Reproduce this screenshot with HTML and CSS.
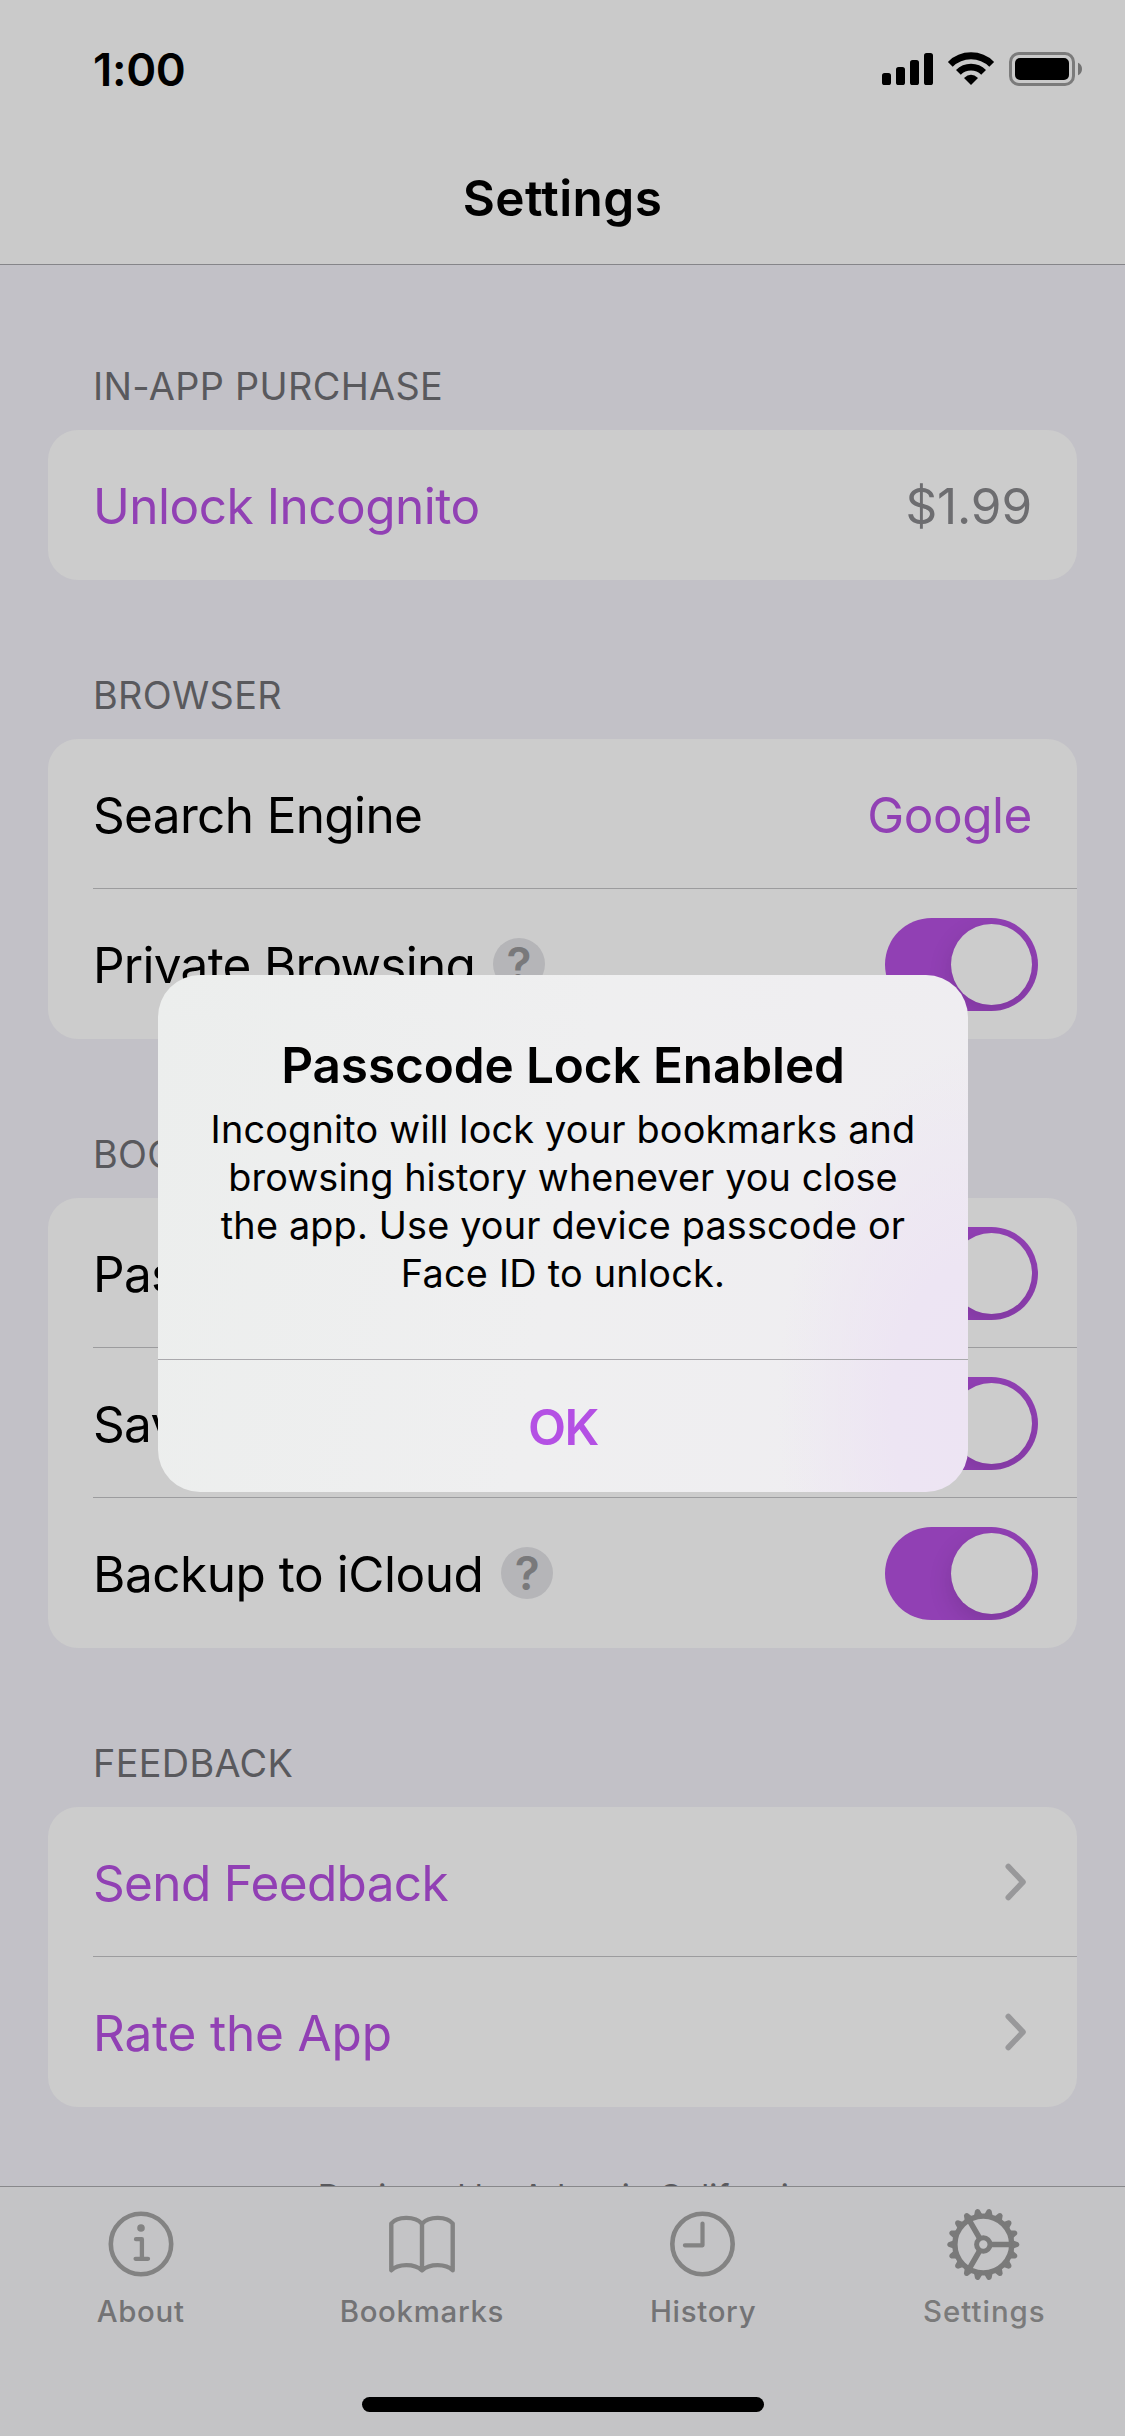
FILE: index.html
```html
<!DOCTYPE html>
<html lang="en">
<head>
<meta charset="utf-8">
<title>Settings</title>
<link rel="stylesheet" href="styles.css">
</head>
<body>
<div class="screen">
  <header class="navbar">
    <div class="status">
      <span class="time">1:00</span>
      <svg class="status-icons" width="204" height="40" viewBox="880 49 204 40">
        <rect x="882" y="73" width="9" height="12" rx="2.6"/>
        <rect x="896" y="67" width="9" height="18" rx="2.6"/>
        <rect x="910" y="60" width="9" height="25" rx="2.6"/>
        <rect x="924" y="53" width="9" height="32" rx="2.6"/>
        <path d="M950.3 64.3A29.3 29.3 0 0 1 991.7 64.3M958.4 72.4A17.9 17.9 0 0 1 983.6 72.4" fill="none" stroke="#000" stroke-width="6.8"/>
        <path d="M971 85L964 78Q971 71.5 978 78Z"/>
        <rect x="1010.5" y="53.5" width="63" height="31" rx="8.5" fill="none" stroke="#7b7b7b" stroke-width="3"/>
        <rect x="1015" y="58" width="54" height="22" rx="5"/>
        <path d="M1078 62.7Q1082 64.5 1082 69T1078 75.3Z" fill="#737373"/>
      </svg>
    </div>
    <h1 class="title">Settings</h1>
  </header>

  <main class="content">
    <section class="group">
      <h2 class="group-title">IN-APP PURCHASE</h2>
      <div class="card">
        <div class="row"><span class="label link unlock">Unlock Incognito</span><span class="value price">$1.99</span></div>
      </div>
    </section>

    <section class="group">
      <h2 class="group-title">BROWSER</h2>
      <div class="card">
        <div class="row"><span class="label">Search Engine</span><span class="value link engine">Google</span></div>
        <div class="row"><span class="label private">Private Browsing</span><span class="help">?</span><span class="toggle"><span class="knob"></span></span></div>
      </div>
    </section>

    <section class="group">
      <h2 class="group-title">BOOKMARKS</h2>
      <div class="card">
        <div class="row"><span class="label">Passcode Lock</span><span class="toggle"><span class="knob"></span></span></div>
        <div class="row"><span class="label">Save History</span><span class="toggle"><span class="knob"></span></span></div>
        <div class="row"><span class="label backup">Backup to iCloud</span><span class="help">?</span><span class="toggle"><span class="knob"></span></span></div>
      </div>
    </section>

    <section class="group">
      <h2 class="group-title">FEEDBACK</h2>
      <div class="card">
        <div class="row"><span class="label link">Send Feedback</span><svg class="chevron" width="22" height="38" viewBox="0 0 22 38"><path d="M3.3 3.5L18 19L3.3 34.5"/></svg></div>
        <div class="row"><span class="label link rate">Rate the App</span><svg class="chevron" width="22" height="38" viewBox="0 0 22 38"><path d="M3.3 3.5L18 19L3.3 34.5"/></svg></div>
      </div>
    </section>

    <p class="credit">Designed by Adam in California</p>
  </main>

  <nav class="tabbar">
    <div class="tab">
      <svg class="tab-icon" width="80" height="80" viewBox="-40 -40 80 80">
        <circle r="30.2"/>
        <path d="M-5 -4.8H.9V14.8M-5.4 14.8H7" stroke-width="4.3"/>
        <circle cy="-16" r="3.8" class="solid"/>
      </svg>
      <span class="tab-label about">About</span>
    </div>
    <div class="tab">
      <svg class="tab-icon" width="80" height="80" viewBox="-40 -40 80 80">
        <path d="M-30.7 26.3V-20.5C-25 -27.8 -7 -28.3 0 -20.3C7 -28.3 25 -27.8 30.7 -20.5V26.3C24 19.7 8 19.2 0 26.3C-8 19.2 -24 19.7 -30.7 26.3ZM0 -20.3V26.3" stroke-width="4.4"/>
      </svg>
      <span class="tab-label">Bookmarks</span>
    </div>
    <div class="tab">
      <svg class="tab-icon" width="80" height="80" viewBox="-39.5 -40 80 80">
        <circle r="30.2"/>
        <path d="M0 -20.5V1.3H-17.6" stroke-width="4.2"/>
      </svg>
      <span class="tab-label">History</span>
    </div>
    <div class="tab active">
      <svg class="tab-icon" width="80" height="80" viewBox="-39.3 -40.5 80 80">
        <defs>
          <path id="tooth" d="M29.5 -4.6L31.3 -3.6L34.8 -2.3Q37.4 0 34.8 2.3L31.3 3.6L29.5 4.6Z" class="solid"/>
          <g id="teeth"><use href="#tooth"/><use href="#tooth" transform="rotate(20)"/><use href="#tooth" transform="rotate(40)"/><use href="#tooth" transform="rotate(60)"/><use href="#tooth" transform="rotate(80)"/><use href="#tooth" transform="rotate(100)"/></g>
        </defs>
        <circle r="28.4" stroke-width="5.4"/>
        <circle r="6.7" stroke-width="5"/>
        <path d="M8 0H28M-4 -6.9L-14 -24.2M-4 6.9L-14 24.2" stroke-width="5.6" class="butt"/>
        <use href="#teeth"/><use href="#teeth" transform="rotate(120)"/><use href="#teeth" transform="rotate(240)"/>
      </svg>
      <span class="tab-label settings">Settings</span>
    </div>
    <div class="home-indicator"></div>
  </nav>

  <div class="alert">
    <div class="alert-body">
      <h3 class="alert-title">Passcode Lock Enabled</h3>
      <p class="alert-text">
        <span class="line line-1">Incognito will lock your bookmarks and</span>
        <span class="line line-2">browsing history whenever you close</span>
        <span class="line line-3">the app. Use your device passcode or</span>
        <span class="line line-4">Face ID to unlock.</span>
      </p>
    </div>
    <div class="alert-action">OK</div>
  </div>
</div>
</body>
</html>
```

FILE: styles.css
```css
* { box-sizing: border-box; }

body {
  margin: 0;
  font-family: Inter, "Liberation Sans", sans-serif;
  color: #000;
}

h1, h2, h3, p { margin: 0; font-weight: 400; }

.screen {
  position: relative;
  display: flex;
  flex-direction: column;
  width: 1125px;
  height: 2436px;
  overflow: hidden;
  background: #c2c1c7;
}

/* Navigation bar */
.navbar {
  flex: none;
  height: 265px;
  background: #cacaca;
  border-bottom: 1px solid #858589;
}

.status {
  display: flex;
  justify-content: space-between;
  align-items: center;
  height: 138px;
  padding: 0 41px 0 93px;
}

.time {
  font-size: 45.5px;
  font-weight: 600;
  letter-spacing: -0.3px;
}

.status-icons { flex: none; }

.title {
  height: 120px;
  line-height: 120px;
  text-align: center;
  font-size: 49.5px;
  font-weight: 600;
  letter-spacing: 0.42px;
}

/* Grouped settings list */
.content {
  flex: 1;
  min-height: 0;
  overflow: hidden;
  padding: 91px 48px 0;
}

.group + .group { margin-top: 85px; }

.group-title {
  margin-bottom: 14px;
  padding-left: 45px;
  line-height: 60px;
  font-size: 37.8px;
  letter-spacing: 0.34px;
  color: #59595d;
}

.card {
  border-radius: 30px;
  background: #ccc;
}

.row {
  display: flex;
  align-items: center;
  height: 150px;
  margin-left: 45px;
  padding-right: 45px;
  font-size: 49.5px;
}

.row + .row { box-shadow: 0 -1px 0 #9c9c9e; }

.label, .value {
  padding-top: 1px;
  line-height: 60px;
  letter-spacing: -0.65px;
  white-space: nowrap;
}

.link { color: #9140b4; }

.value, .toggle, .chevron { margin-left: auto; }

.price { color: #6d6d70; letter-spacing: -0.13px; }
.engine { letter-spacing: -0.45px; }
.unlock { letter-spacing: -0.49px; }
.private { letter-spacing: -0.75px; }
.backup { letter-spacing: -0.47px; }
.rate { letter-spacing: -0.18px; }

.help {
  width: 52px;
  height: 52px;
  margin-left: 18px;
  border-radius: 50%;
  background: #b5b5b8;
  color: #79797b;
  font-size: 46px;
  font-weight: 600;
  line-height: 53px;
  text-align: center;
}

.toggle {
  width: 153px;
  height: 93px;
  margin-right: -6px;
  padding: 6px;
  overflow: hidden;
  border-radius: 47px;
  background: #9140b4;
}

.knob {
  display: block;
  width: 81px;
  height: 81px;
  margin-left: auto;
  border-radius: 50%;
  background: #ccc;
  box-shadow: 0 9px 24px rgba(0, 0, 0, 0.13);
}

.chevron {
  margin-right: 5px;
  fill: none;
  stroke: #98989a;
  stroke-width: 5.6;
  stroke-linecap: round;
  stroke-linejoin: round;
}

.credit {
  margin-top: 69px;
  line-height: 40px;
  text-align: center;
  font-size: 33px;
  color: #59595d;
}

/* Tab bar */
.tabbar {
  flex: none;
  display: grid;
  grid-template-columns: repeat(4, 1fr);
  align-content: start;
  height: 250px;
  border-top: 1px solid #88888b;
  background: #c4c4c6;
  color: #737375;
}

.tab {
  display: flex;
  flex-direction: column;
  align-items: center;
  height: 210px;
  padding-top: 17px;
}

.tab-icon {
  fill: none;
  stroke: #838383;
  stroke-width: 4.6;
  stroke-linecap: round;
  stroke-linejoin: round;
}

.solid { fill: #838383; stroke: none; }
.butt { stroke-linecap: butt; }

.active { color: #7a7a7a; }
.active .tab-icon { stroke: #7a7a7a; }
.active .solid { fill: #7a7a7a; }

.tab-label {
  margin-top: 8px;
  line-height: 40px;
  font-size: 29.4px;
  font-weight: 500;
  letter-spacing: 0.7px;
}

.tab-label.settings { letter-spacing: 1px; }

.home-indicator {
  grid-column: 1 / -1;
  justify-self: center;
  width: 402px;
  height: 15px;
  border-radius: 8px;
  background: #000;
}

/* Alert dialog */
.alert {
  position: absolute;
  left: 158px;
  top: 975px;
  width: 810px;
  height: 517px;
  border-radius: 42px;
  overflow: hidden;
  text-align: center;
  background:
    radial-gradient(ellipse 190px 360px at 100% 84%, #ede4f3 0%, #ede5f3 40%, rgba(238, 234, 242, 0) 100%),
    linear-gradient(100deg, #eceeed, #efeff0 50%, #efedf1);
}

.alert-body {
  height: 385px;
  padding-top: 60px;
  border-bottom: 1px solid #aaa9ad;
}

.alert-title {
  line-height: 60px;
  font-size: 49.5px;
  font-weight: 600;
  letter-spacing: -0.12px;
}

.alert-text {
  margin-top: 10px;
  font-size: 37.8px;
  line-height: 48px;
}

.line { display: block; white-space: nowrap; }
.line-1 { letter-spacing: 0.2px; }
.line-2 { letter-spacing: 0.11px; }
.line-3 { letter-spacing: 0.17px; }
.line-4 { letter-spacing: 0.25px; }

.alert-action {
  line-height: 132px;
  padding-top: 1px;
  font-size: 49.5px;
  font-weight: 600;
  letter-spacing: -1.5px;
  color: #b450e4;
}
```
